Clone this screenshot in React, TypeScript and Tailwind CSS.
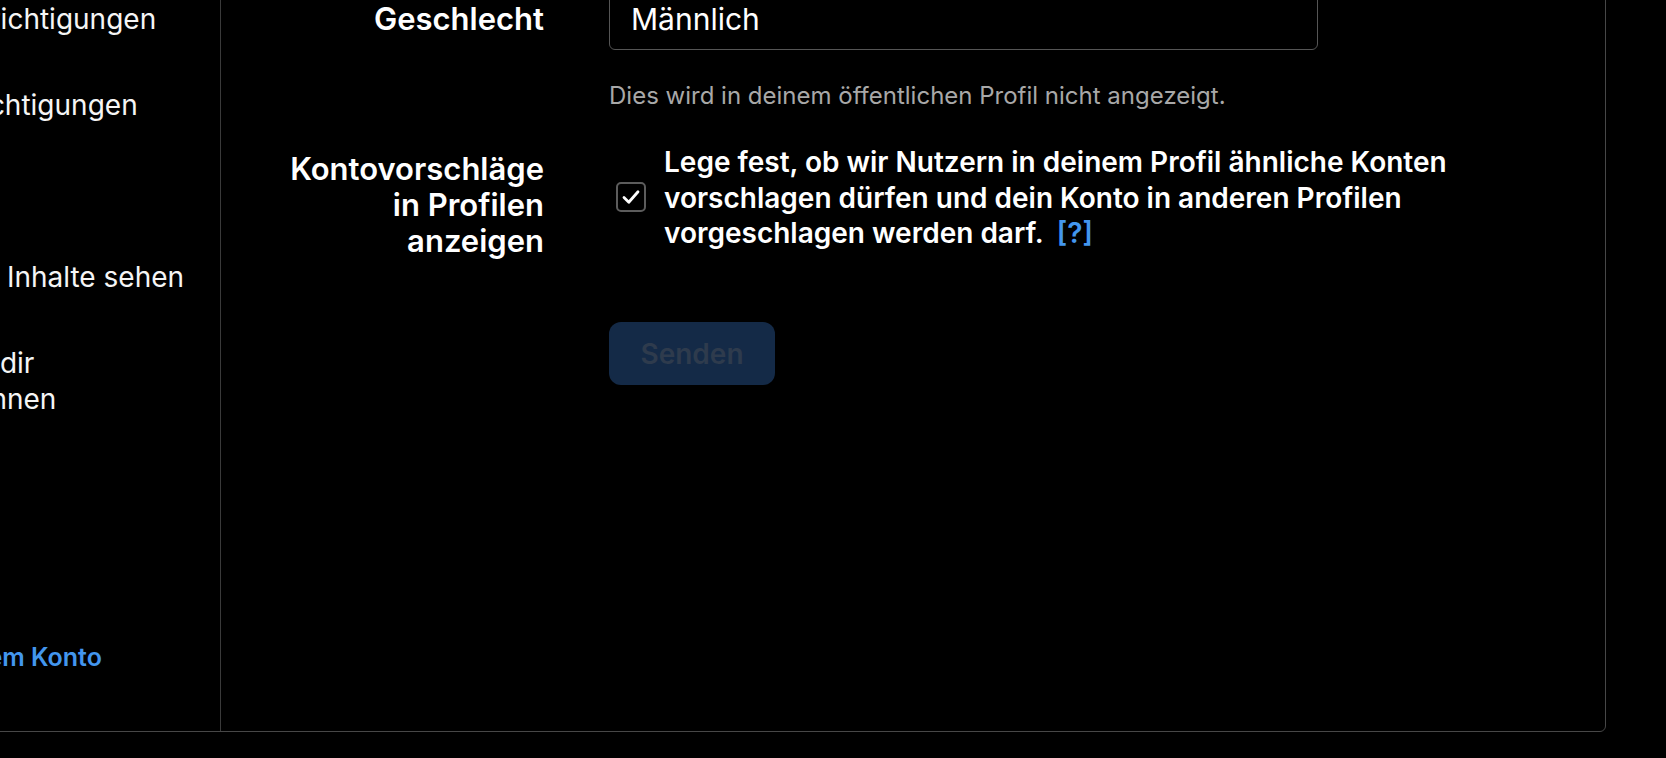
import React from 'react';

const navItems = [
  'Profil bearbeiten',
  'E-Mail-Benachrichtigungen',
  'Push-Benachrichtigungen',
  'Was du siehst',
  'Wer kann deine Inhalte sehen',
  'Wie andere mit dir interagieren können',
  'Sprache',
  'Hilfe',
];

const Sidebar: React.FC = () => (
  <nav className="w-[460px] shrink-0 border-r border-[#3a3a3a] pt-[9px] pl-[32px] pr-[32px]">
    {navItems.map((item) => (
      <div key={item} className="py-[25px] text-[28px] leading-[36px] text-[#f5f5f5]">
        {item}
      </div>
    ))}
    <div className="py-[25px] pr-[40px] text-[25px] leading-[36px] font-semibold text-[#4396ee]">
      Zu professionellem Konto wechseln
    </div>
  </nav>
);

const CheckIcon: React.FC = () => (
  <svg viewBox="0 0 24 24" className="w-[24px] h-[24px]" fill="none">
    <polyline points="5,12.5 9.8,17.2 19,6.8" stroke="#ffffff" strokeWidth="2.8" strokeLinecap="round" strokeLinejoin="round" />
  </svg>
);

export default function App() {
  return (
    <div className="w-[1666px] h-[758px] bg-black overflow-hidden font-['Inter',sans-serif] text-white">
      <div className="-ml-[240px] -mt-[120px] w-[1846px] h-[852px] flex border border-[#474747] rounded-[6px] overflow-hidden">
        <Sidebar />

        <main className="flex-1 pt-[107px]">
          {/* Geschlecht */}
          <div className="flex">
            <label className="w-[323px] shrink-0 pl-[50px] text-right text-[31px] leading-[62px] font-semibold">
              Geschlecht
            </label>
            <div className="pl-[65px]">
              <input
                readOnly
                value="Männlich"
                className="w-[709px] h-[62px] rounded-[6px] border border-[#555555] bg-black px-[21px] text-[30px] text-white outline-none"
              />
              <p className="mt-[30px] text-[24px] leading-[32px] text-[#a8a8a8]">
                Dies wird in deinem öffentlichen Profil nicht angezeigt.
              </p>
            </div>
          </div>

          {/* Kontovorschläge */}
          <div className="flex mt-[33px]">
            <label className="w-[323px] shrink-0 pl-[50px] pt-[6px] text-right text-[31px] leading-[36px] font-semibold">
              Kontovorschläge in Profilen anzeigen
            </label>
            <div className="flex-1 pl-[65px] pr-[100px] flex items-start">
              <div className="ml-[7px] mt-[37px] w-[30px] h-[30px] shrink-0 rounded-[5px] border-2 border-[#5c5c5c] flex items-center justify-center">
                <CheckIcon />
              </div>
              <p className="ml-[18px] text-[28px] leading-[35.5px] font-semibold">
                Lege fest, ob wir Nutzern in deinem Profil ähnliche Konten vorschlagen dürfen und dein Konto in anderen Profilen vorgeschlagen werden darf.
                <span className="ml-[13px] text-[#4396ee]">[?]</span>
              </p>
            </div>
          </div>

          {/* Senden */}
          <div className="flex mt-[63px]">
            <div className="w-[323px] shrink-0" />
            <div className="pl-[65px]">
              <button className="h-[63px] w-[166px] rounded-[12px] bg-[#142a47] text-[28px] font-semibold text-[#2e3b4d]">
                Senden
              </button>
            </div>
          </div>
        </main>
      </div>
    </div>
  );
}
